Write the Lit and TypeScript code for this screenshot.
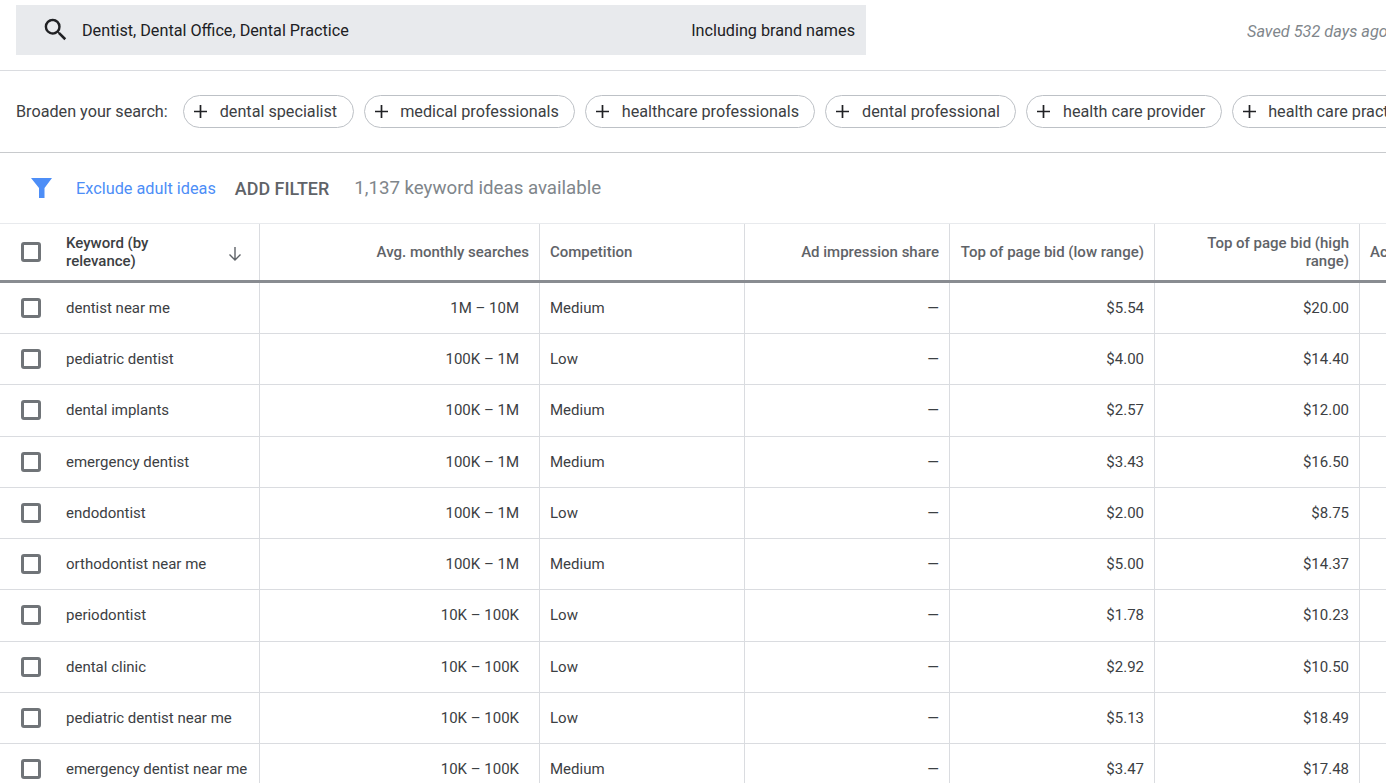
import { LitElement, html, css } from "lit";
import { customElement } from "lit/decorators.js";

const rows: [string, string, string, string, string][] = [
  ["dentist near me", "1M – 10M", "Medium", "$5.54", "$20.00"],
  ["pediatric dentist", "100K – 1M", "Low", "$4.00", "$14.40"],
  ["dental implants", "100K – 1M", "Medium", "$2.57", "$12.00"],
  ["emergency dentist", "100K – 1M", "Medium", "$3.43", "$16.50"],
  ["endodontist", "100K – 1M", "Low", "$2.00", "$8.75"],
  ["orthodontist near me", "100K – 1M", "Medium", "$5.00", "$14.37"],
  ["periodontist", "10K – 100K", "Low", "$1.78", "$10.23"],
  ["dental clinic", "10K – 100K", "Low", "$2.92", "$10.50"],
  ["pediatric dentist near me", "10K – 100K", "Low", "$5.13", "$18.49"],
  ["emergency dentist near me", "10K – 100K", "Medium", "$3.47", "$17.48"],
];
const chips = ["dental specialist", "medical professionals", "healthcare professionals", "dental professional", "health care provider", "health care practice"];

@customElement("app-root")
export class AppRoot extends LitElement {
  static styles = css`
    :host { display: block; width: 1386px; height: 783px; overflow: hidden; background: #fff; font-family: Roboto, "Liberation Sans", sans-serif; color: #3c4043; }
    .top { height: 71px; box-sizing: border-box; border-bottom: 1px solid #dadce0; display: flex; align-items: flex-start; justify-content: space-between; }
    .search { margin: 5px 0 0 16px; width: 850px; height: 50px; background: #e8eaed; display: flex; align-items: center; box-sizing: border-box; padding: 0 11px 0 25px; font-size: 16.2px; color: #202124; }
    .search svg { width: 29.5px; height: 29.5px; margin-right: 11.5px; flex: none; }
    .search .q { flex: 1; }
    .saved { font-size: 16.3px; font-style: italic; color: #80868b; margin-top: 22px; white-space: nowrap; width: 139px; overflow: hidden; }
    .broaden { height: 82px; box-sizing: border-box; border-bottom: 1px solid #c8cacd; display: flex; align-items: center; padding-left: 16px; white-space: nowrap; overflow: hidden; font-size: 16.2px; }
    .broaden .lab { color: #3c4043; margin-right: 15.4px; }
    .chip { flex: none; height: 33px; box-sizing: border-box; border: 1px solid #bdc1c6; border-radius: 17px; display: flex; align-items: center; padding: 0 15.4px 0 9px; margin-right: 10px; color: #3c4043; }
    .chip svg { width: 15px; height: 15px; margin-right: 11.6px; flex: none; }
    .filter { height: 71px; box-sizing: border-box; border-bottom: 1px solid #e8eaed; display: flex; align-items: center; padding-left: 30px; }
    .filter svg { width: 22px; height: 22px; margin-right: 24px; flex: none; }
    .link { color: #4d8ef7; font-size: 16.3px; margin-right: 19px; }
    .add { color: #5f6368; font-size: 17.9px; font-weight: 500; margin-right: 25px; }
    .count { color: #80868b; font-size: 18.7px; }
    .grid { display: grid; grid-template-columns: 260px 280px 205px 205px 205px 205px 26px; }
    .cell { box-sizing: border-box; border-right: 1px solid #dadce0; display: flex; align-items: center; font-size: 15px; line-height: 20px; color: #3c4043; padding: 0 10px; }
    .r { justify-content: flex-end; text-align: right; }
    .pad { padding-right: 20px; }
    .first { padding: 0 0 0 21px; }
    .last { border-right: none; white-space: nowrap; overflow: hidden; }
    .box { width: 20px; height: 20px; box-sizing: border-box; border: 3px solid #707478; border-radius: 3px; margin-right: 25px; flex: none; }
    .head { height: 59px; box-sizing: border-box; border-bottom: 3px solid #898c91; }
    .head .cell { font-weight: 500; color: #5f6368; line-height: 18px; height: 56px; }
    .head .kw { color: #3c4043; width: 125px; flex: none; }
    .head .arrow { width: 18px; height: 18px; margin-left: 35px; margin-top: 3px; flex: none; }
    .row .cell { height: 51.22px; border-bottom: 1px solid #dadce0; padding-bottom: 0.22px; }
    .row { display: contents; }
  `;

  render() {
    return html`
      <div class="top">
        <div class="search">
          <svg viewBox="0 0 24 24"><path fill="#202124" d="M15.5 14h-.79l-.28-.27A6.47 6.47 0 0 0 16 9.5 6.5 6.5 0 1 0 9.5 16c1.61 0 3.09-.59 4.23-1.57l.27.28v.79l5 4.99L20.49 19l-4.99-5zm-6 0C7.01 14 5 11.99 5 9.5S7.01 5 9.5 5 14 7.01 14 9.5 11.99 14 9.5 14z"/></svg>
          <span class="q">Dentist, Dental Office, Dental Practice</span>
          <span>Including brand names</span>
        </div>
        <div class="saved">Saved 532 days ago</div>
      </div>
      <div class="broaden">
        <span class="lab">Broaden your search:</span>
        ${chips.map(
          (c) => html`<div class="chip"><svg viewBox="0 0 15 15"><path d="M7.500 1v13M1 7.500h13" stroke="#202124" stroke-width="1.700" fill="none"/></svg>${c}</div>`
        )}
      </div>
      <div class="filter">
        <svg viewBox="0 0 22 22"><path fill="#4d8ef7" d="M1 1h21l-7.500 10V21H9V11z"/></svg>
        <span class="link">Exclude adult ideas</span>
        <span class="add">ADD FILTER</span>
        <span class="count">1,137 keyword ideas available</span>
      </div>
      <div class="grid head">
        <div class="cell first">
          <span class="box"></span><span class="kw">Keyword (by relevance)</span>
          <svg class="arrow" viewBox="0 0 18 18"><path d="M9 2v13M3.500 9.500 9 15l5.500-5.500" stroke="#5f6368" stroke-width="1.400" fill="none"/></svg>
        </div>
        <div class="cell r">Avg. monthly searches</div>
        <div class="cell">Competition</div>
        <div class="cell r">Ad impression share</div>
        <div class="cell r">Top of page bid (low range)</div>
        <div class="cell r">Top of page bid (high range)</div>
        <div class="cell last">Account status</div>
      </div>
      <div class="grid">
        ${rows.map(
          (r) => html`<div class="row">
            <div class="cell first"><span class="box"></span>${r[0]}</div>
            <div class="cell r pad">${r[1]}</div>
            <div class="cell">${r[2]}</div>
            <div class="cell r">—</div>
            <div class="cell r">${r[3]}</div>
            <div class="cell r">${r[4]}</div>
            <div class="cell last"></div>
          </div>`
        )}
      </div>
    `;
  }
}
